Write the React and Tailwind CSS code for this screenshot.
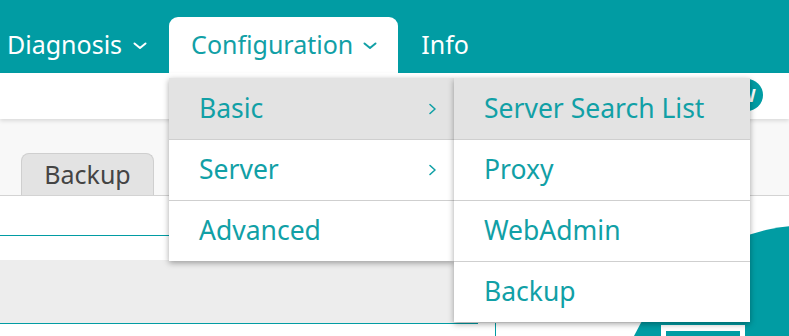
import React from "react";

const Down = ({ className }) => (
  <svg width="14" height="8" viewBox="0 0 14 8" className={className}>
    <path d="M1.5 1.5 L7 6 L12.5 1.5" fill="none" stroke="currentColor" strokeWidth="2" strokeLinecap="round" strokeLinejoin="round" />
  </svg>
);

const Right = () => (
  <svg width="9" height="12" viewBox="0 0 9 12" className="text-[#11a0a6]">
    <path d="M2 1.5 L7 6 L2 10.5" fill="none" stroke="currentColor" strokeWidth="1.6" strokeLinecap="round" strokeLinejoin="round" />
  </svg>
);

const MenuItem = ({ label, active, sub, first }) => (
  <div
    className={`h-[61px] flex items-center justify-between pl-[30px] pr-[17px] ${first ? "" : "border-t border-[#cfcfcf]"} ${active ? "bg-[#e3e3e3]" : "bg-white"}`}
  >
    <span>{label}</span>
    {sub && <Right />}
  </div>
);

export default function App() {
  return (
    <div
      className="relative w-[789px] h-[336px] overflow-hidden bg-white text-[25px]"
      style={{ fontFamily: '"Noto Sans", "DejaVu Sans", sans-serif' }}
    >
      {/* top nav */}
      <header className="h-[73px] bg-[#019ca3] flex items-end text-white">
        <div className="h-[56px] flex items-center pl-[7px]">
          <span>Diagnosis</span>
          <Down className="ml-[11px] mt-[1px]" />
        </div>
        <div className="h-[56px] ml-[22px] pl-[22px] pr-[21px] flex items-center bg-white rounded-t-[9px] text-[#11a0a6]">
          <span>Configuration</span>
          <Down className="ml-[10px] mt-[1px]" />
        </div>
        <div className="h-[56px] ml-[23px] flex items-center">
          <span>Info</span>
        </div>
      </header>

      {/* sub strip */}
      <div className="relative h-[46px] bg-white shadow-[0_2px_4px_rgba(0,0,0,0.12)] z-10">
        <div className="absolute left-[731px] top-[6px] w-[32px] h-[32px] rounded-full bg-[#019ca3] flex items-center justify-center text-white text-[18px] font-bold">
          W
        </div>
      </div>

      {/* tabs */}
      <div className="h-[77px] bg-[#f8f8f8] flex items-end pl-[21px] border-b border-[#d3d3d3]">
        <div className="w-[133px] h-[42px] bg-[#e3e3e3] border border-b-0 border-[#cfcfcf] rounded-t-[8px] flex items-center justify-center text-[#444]">
          Backup
        </div>
      </div>

      {/* content */}
      <div className="h-[39px] bg-white" />
      <div className="h-px w-[478px] bg-[#019ca3]" />
      <div className="h-[24px] bg-white" />
      <div className="h-[63px] bg-[#ededed]" />
      <div className="flex">
        <div className="h-px w-[478px] bg-[#019ca3]" />
      </div>

      {/* column divider */}
      <div className="absolute left-[495px] top-[323px] w-px h-[13px] bg-[#019ca3]" />

      {/* decorative blob */}
      <svg className="absolute left-0 top-0" width="789" height="336" viewBox="0 0 789 336">
        <circle cx="810" cy="420" r="195" fill="#019ca3" />
        <rect x="661" y="325" width="84" height="20" fill="#ffffff" />
        <rect x="666" y="331" width="74" height="20" fill="#019ca3" />
      </svg>

      {/* dropdowns */}
      <div className="absolute left-[169px] top-[78px] flex items-start text-[#11a0a6] text-[26.5px] z-20">
        <div className="w-[285px] bg-white shadow-[0_2px_6px_rgba(0,0,0,0.35)]">
          <MenuItem label="Basic" active sub first />
          <MenuItem label="Server" sub />
          <MenuItem label="Advanced" />
        </div>
        <div className="w-[296px] bg-white shadow-[0_2px_6px_rgba(0,0,0,0.35)]">
          <MenuItem label="Server Search List" active first />
          <MenuItem label="Proxy" />
          <MenuItem label="WebAdmin" />
          <MenuItem label="Backup" />
        </div>
      </div>
    </div>
  );
}
